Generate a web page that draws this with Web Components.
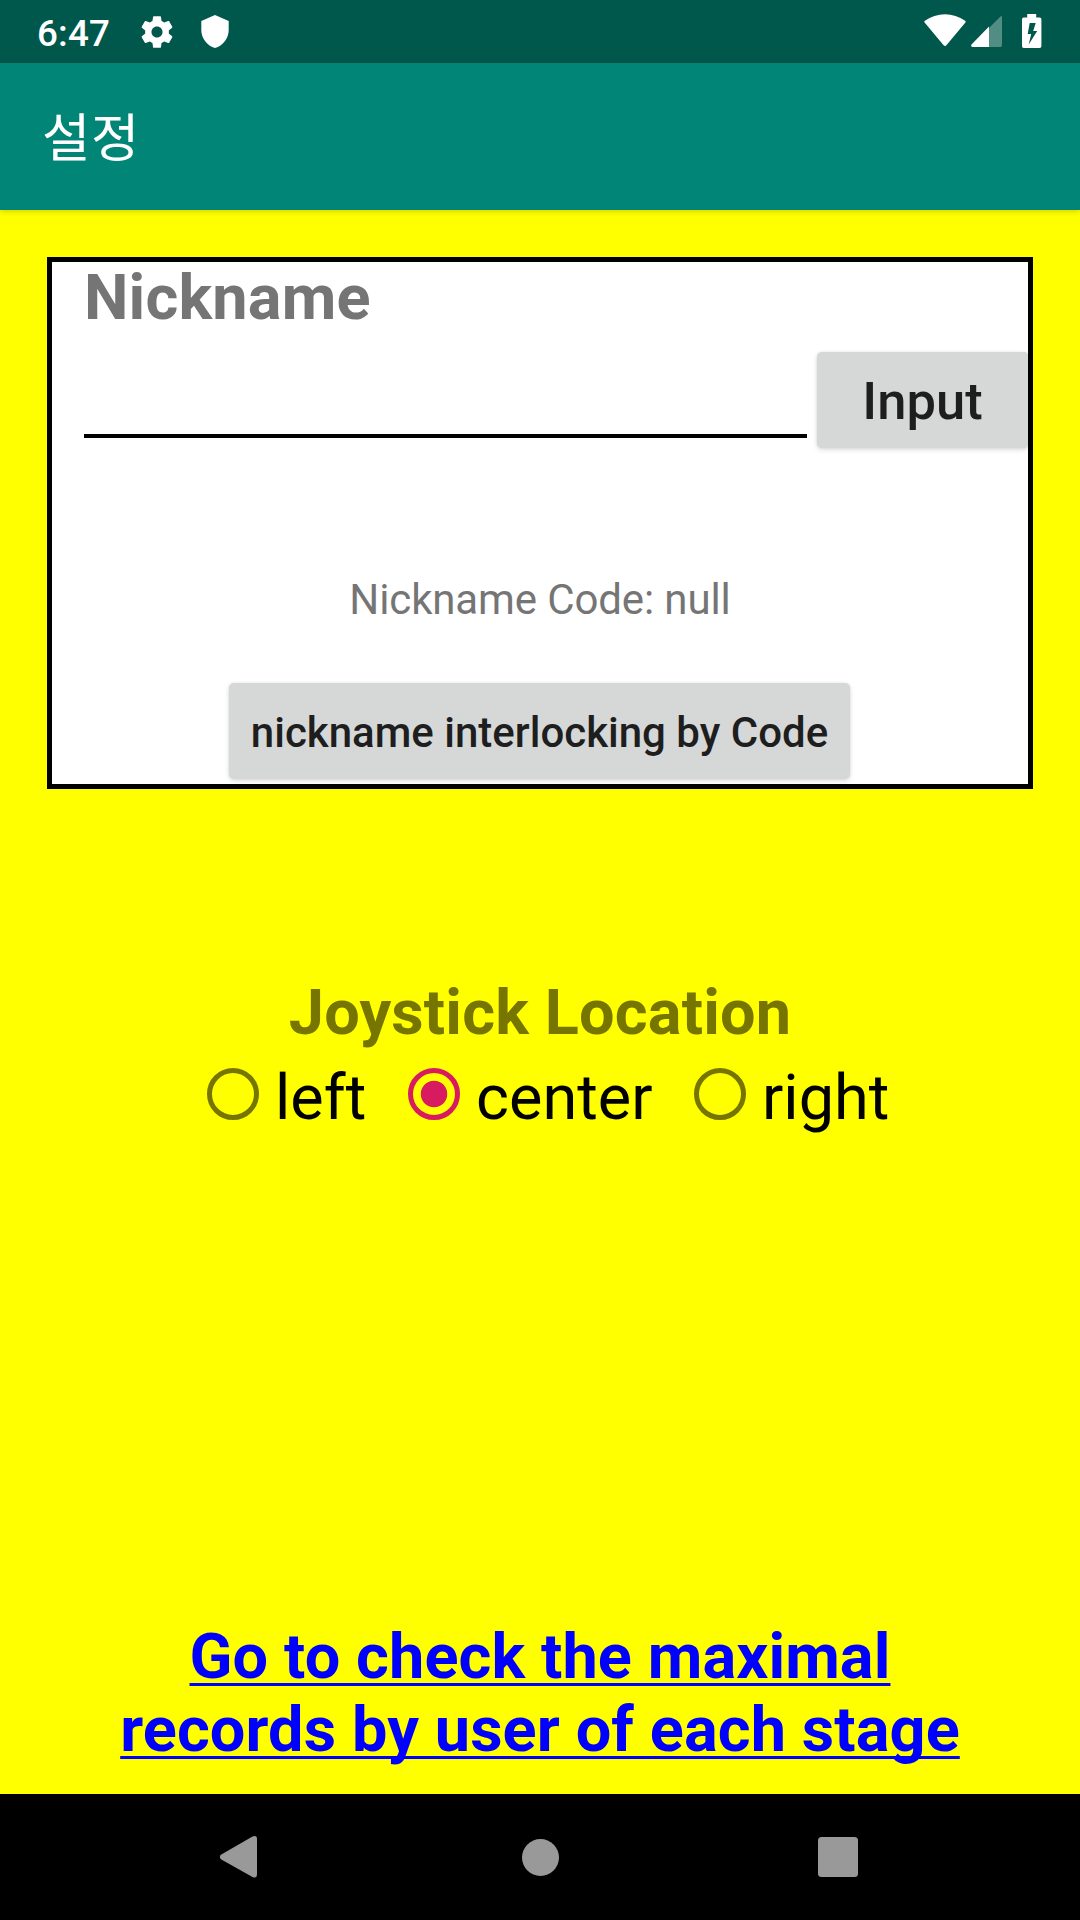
<!DOCTYPE html>
<html lang="ko">
<head>
<meta charset="utf-8">
<title>설정</title>
<style>
html,body{margin:0;padding:0}
body{width:1080px;height:1920px;overflow:hidden;font-family:Roboto,"Noto Sans CJK KR",sans-serif}
</style>
</head>
<body>
<settings-screen></settings-screen>
<script>
const define = (name, html) => customElements.define(name, class extends HTMLElement {
  constructor() {
    super();
    this.attachShadow({ mode: 'open' }).innerHTML = html;
  }
});

define('status-bar', `
<style>
:host{display:flex;align-items:flex-start;height:63px;background:#00574b;color:#fff;box-sizing:border-box}
.time{font-size:36.75px;font-weight:500;line-height:43px;margin:12px 0 0 37px;width:98px;white-space:nowrap;letter-spacing:.15px}
svg{display:block;flex:none}
.grow{flex:1}
</style>
<span class="time">6:47</span>
<svg style="margin:13px 0 0 3px" width="38" height="38" viewBox="0 0 24 24"><path fill="#fff" d="M19.43 12.98c.04-.32.07-.64.07-.98s-.03-.66-.07-.98l2.11-1.65c.19-.15.24-.42.12-.64l-2-3.46c-.12-.22-.39-.3-.61-.22l-2.49 1c-.52-.4-1.08-.73-1.69-.98l-.38-2.65A.488.488 0 0 0 14 2h-4c-.25 0-.46.18-.49.42l-.38 2.65c-.61.25-1.17.59-1.69.98l-2.49-1c-.23-.09-.49 0-.61.22l-2 3.46c-.13.22-.07.49.12.64l2.11 1.65c-.04.32-.07.65-.07.98s.03.66.07.98l-2.11 1.65c-.19.15-.24.42-.12.64l2 3.46c.12.22.39.3.61.22l2.49-1c.52.4 1.08.73 1.69.98l.38 2.65c.03.24.24.42.49.42h4c.25 0 .46-.18.49-.42l.38-2.65c.61-.25 1.17-.59 1.69-.98l2.49 1c.23.09.49 0 .61-.22l2-3.46c.12-.22.07-.49-.12-.64l-2.11-1.65zM12 15.5c-1.93 0-3.5-1.57-3.5-3.5s1.57-3.5 3.5-3.5 3.500 1.570 3.500 3.500-1.570 3.500-3.500 3.500z"/></svg>
<svg style="margin:15px 0 0 25px" width="28" height="33" viewBox="0 0 28 33"><path fill="#fff" d="M14 0L27.700 6v9c0 8.300-5.800 16-13.700 18C6.100 31 .3 23.300.3 15V6z"/></svg>
<span class="grow"></span>
<svg style="margin:14px 0 0" width="42" height="33" viewBox="0 0 42 33"><path fill="#fff" d="M.8 8.800Q-.3 7.600.9 6.800C12.600-2 29.400-2 41.100 6.800Q42.300 7.600 41.200 8.800L22.600 31Q21 33 19.400 31z"/></svg>
<svg style="margin:15px 0 0 5px" width="32" height="32" viewBox="0 0 32 32"><path fill="#fff" fill-opacity=".32" d="M18 13L29.500 1.500Q31 .2 31 2V30Q31 32 29.500 32H18z"/><path fill="#fff" d="M18 11.500V32H1.500Q-.6 31.700.5 29.500z"/></svg>
<svg style="margin:14px 38px 0 19px" width="20" height="34" viewBox="0 0 20 34"><path fill="#fff" fill-rule="evenodd" d="M5.200 0h9v3.500h3.500q1.700 0 1.700 1.700v27q0 1.700-1.700 1.700H1.700q-1.700 0-1.700-1.700v-27q0-1.700 1.700-1.700h3.500zM7.700 9L5.700 20h3.500L6.700 30.500 15.200 17H11.200L13.700 9z"/></svg>
`);

define('app-bar', `
<style>
:host{display:flex;align-items:center;height:147px;padding-left:42px;box-sizing:border-box;background:#008577;color:#fff;font-size:52.5px;line-height:76px;position:relative;box-shadow:0 1px 6px rgba(0,0,0,.2)}
span{display:block;letter-spacing:.7px;margin-top:4px}
</style><span><slot></slot></span>`);

define('raised-button', `
<style>
:host{display:flex;align-items:center;justify-content:center;height:96px;box-sizing:border-box;padding-top:2px;border-radius:5px;background:#d6d8d7;color:#1e1e1e;font-weight:500;white-space:nowrap;box-shadow:0 2px 5px rgba(0,0,0,.13),0 0 3px rgba(0,0,0,.08)}
</style><slot></slot>`);

define('nickname-card', `
<style>
:host{display:flex;flex-direction:column;box-sizing:border-box;width:986px;height:532px;margin:47px 0 0 47px;border:5px solid #000;background:#fff;color:#757575;overflow:hidden}
h2{margin:0 0 0 32px;font-size:63px;line-height:71px;font-weight:700;height:90px;letter-spacing:.17px}
.row{display:flex;height:96px}
.field{margin-left:32px;width:723px;height:82px;border-bottom:4px solid #000}
.row raised-button{margin-left:10px;width:211px;font-size:52.5px;border-radius:5px 4px 4px 5px;line-height:62px}
.code{margin-top:127px;text-align:center;font-size:42px;line-height:49px;height:108px;box-sizing:border-box;letter-spacing:-.12px}
.link{align-self:flex-start;margin-left:177px;width:621px;font-size:42px;line-height:49px}
</style>
<h2>Nickname</h2>
<div class="row"><div class="field"></div><raised-button>Input</raised-button></div>
<div class="code">Nickname Code: null</div>
<raised-button class="link">nickname interlocking by Code</raised-button>
`);

define('radio-option', `
<style>
:host{display:flex;align-items:flex-start;color:#000;font-size:63px;line-height:73px;white-space:nowrap}
i{display:block;box-sizing:border-box;flex:none;width:52.500px;height:52.500px;margin:6.700px 16px 0 0;border:5.250px solid #757500;border-radius:50%}
:host([checked]) i{border-color:#d81b60;background:radial-gradient(circle closest-side,#d81b60 61%,transparent 65%)}
</style><i></i><slot></slot>`);

define('joystick-group', `
<style>
:host{display:block;margin-top:187px}
h2{margin:0;font-size:63px;line-height:73px;font-weight:700;color:#757500;text-align:center;height:85px;letter-spacing:.17px}
.opts{display:flex;padding-left:206.500px}
.a{width:201px}.b{width:286px}
</style>
<h2>Joystick Location</h2>
<div class="opts"><radio-option class="a">left</radio-option><radio-option class="b" checked>center</radio-option><radio-option>right</radio-option></div>
`);

define('record-link', `
<style>
:host{display:block;margin-top:auto;height:174px;text-align:center}
a{color:#00f;font-size:63px;line-height:73px;font-weight:700;letter-spacing:.11px;text-decoration:underline;text-decoration-thickness:3px;text-underline-offset:5px;text-decoration-skip-ink:none}
</style><a><slot></slot></a>`);

define('nav-bar', `
<style>
:host{display:flex;height:126px;background:#000;align-items:center;justify-content:center}
svg{display:block}
</style>
<svg width="1080" height="126" fill="#999"><path d="M220.900 65.200Q218.900 63 220.900 60.800L252.500 42.500Q257 40.500 257 45V80Q257 85 252.500 83z"/><circle cx="540.500" cy="63.500" r="18.500"/><rect x="818" y="43" width="40" height="40" rx="3.500"/></svg>`);

define('settings-screen', `
<style>
:host{display:flex;flex-direction:column;width:1080px;height:1920px;background:#ff0}
main{flex:1;display:flex;flex-direction:column;min-height:0}
</style>
<status-bar></status-bar>
<app-bar>설정</app-bar>
<main>
<nickname-card></nickname-card>
<joystick-group></joystick-group>
<record-link>Go to check the maximal<br>records by user of each stage</record-link>
</main>
<nav-bar></nav-bar>`);
</script>
</body>
</html>
